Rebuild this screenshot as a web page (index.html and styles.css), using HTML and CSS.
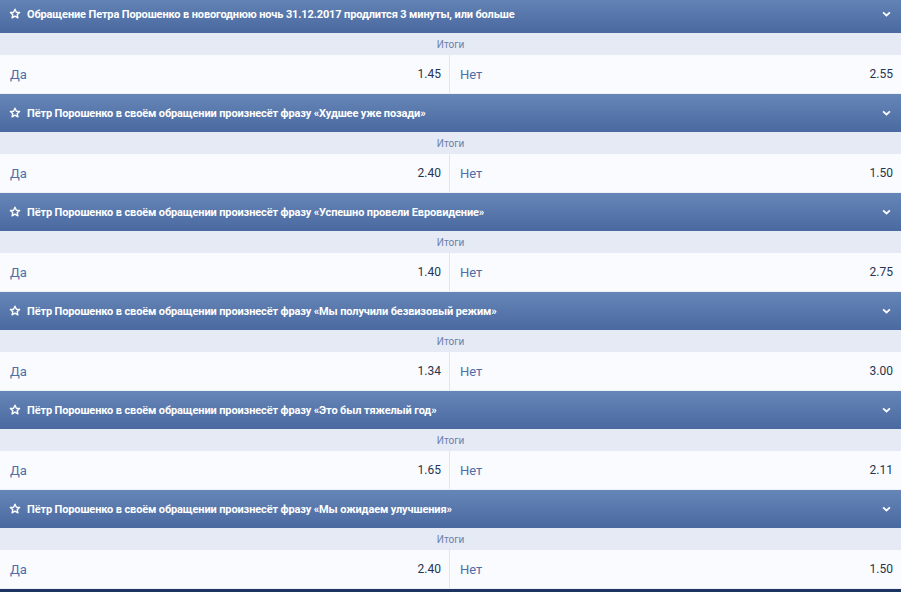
FILE: index.html
```html
<!DOCTYPE html>
<html lang="ru">
<head>
    <meta charset="UTF-8">
    <meta name="viewport" content="width=device-width, initial-scale=1.0">
    <title>Специальные ставки</title>
    <link rel="stylesheet" href="styles.css">
</head>
<body>
    <main class="markets">
        <section class="market">
            <header class="market-head">
                <svg class="star" viewBox="0 0 12 12"><path d="M6 1.2l1.4 3 3.2.3-2.4 2.1.7 3.2L6 8.2 3.1 9.8l.7-3.2L1.4 4.5l3.2-.3z"/></svg>
                <span class="market-title">Обращение Петра Порошенко в новогоднюю ночь 31.12.2017 продлится 3 минуты, или больше</span>
                <svg class="chevron" viewBox="0 0 10 6"><path d="M1.2 1.2L5 4.6l3.8-3.4"/></svg>
            </header>
            <div class="market-group">Итоги</div>
            <div class="outcomes">
                <div class="outcome"><span class="outcome-name">Да</span><span class="odds">1.45</span></div>
                <div class="outcome"><span class="outcome-name">Нет</span><span class="odds">2.55</span></div>
            </div>
        </section>
        <section class="market">
            <header class="market-head">
                <svg class="star" viewBox="0 0 12 12"><path d="M6 1.2l1.4 3 3.2.3-2.4 2.1.7 3.2L6 8.2 3.1 9.8l.7-3.2L1.4 4.5l3.2-.3z"/></svg>
                <span class="market-title">Пётр Порошенко в своём обращении произнесёт фразу «Худшее уже позади»</span>
                <svg class="chevron" viewBox="0 0 10 6"><path d="M1.2 1.2L5 4.6l3.8-3.4"/></svg>
            </header>
            <div class="market-group">Итоги</div>
            <div class="outcomes">
                <div class="outcome"><span class="outcome-name">Да</span><span class="odds">2.40</span></div>
                <div class="outcome"><span class="outcome-name">Нет</span><span class="odds">1.50</span></div>
            </div>
        </section>
        <section class="market">
            <header class="market-head">
                <svg class="star" viewBox="0 0 12 12"><path d="M6 1.2l1.4 3 3.2.3-2.4 2.1.7 3.2L6 8.2 3.1 9.8l.7-3.2L1.4 4.5l3.2-.3z"/></svg>
                <span class="market-title">Пётр Порошенко в своём обращении произнесёт фразу «Успешно провели Евровидение»</span>
                <svg class="chevron" viewBox="0 0 10 6"><path d="M1.2 1.2L5 4.6l3.8-3.4"/></svg>
            </header>
            <div class="market-group">Итоги</div>
            <div class="outcomes">
                <div class="outcome"><span class="outcome-name">Да</span><span class="odds">1.40</span></div>
                <div class="outcome"><span class="outcome-name">Нет</span><span class="odds">2.75</span></div>
            </div>
        </section>
        <section class="market">
            <header class="market-head">
                <svg class="star" viewBox="0 0 12 12"><path d="M6 1.2l1.4 3 3.2.3-2.4 2.1.7 3.2L6 8.2 3.1 9.8l.7-3.2L1.4 4.5l3.2-.3z"/></svg>
                <span class="market-title">Пётр Порошенко в своём обращении произнесёт фразу «Мы получили безвизовый режим»</span>
                <svg class="chevron" viewBox="0 0 10 6"><path d="M1.2 1.2L5 4.6l3.8-3.4"/></svg>
            </header>
            <div class="market-group">Итоги</div>
            <div class="outcomes">
                <div class="outcome"><span class="outcome-name">Да</span><span class="odds">1.34</span></div>
                <div class="outcome"><span class="outcome-name">Нет</span><span class="odds">3.00</span></div>
            </div>
        </section>
        <section class="market">
            <header class="market-head">
                <svg class="star" viewBox="0 0 12 12"><path d="M6 1.2l1.4 3 3.2.3-2.4 2.1.7 3.2L6 8.2 3.1 9.8l.7-3.2L1.4 4.5l3.2-.3z"/></svg>
                <span class="market-title">Пётр Порошенко в своём обращении произнесёт фразу «Это был тяжелый год»</span>
                <svg class="chevron" viewBox="0 0 10 6"><path d="M1.2 1.2L5 4.6l3.8-3.4"/></svg>
            </header>
            <div class="market-group">Итоги</div>
            <div class="outcomes">
                <div class="outcome"><span class="outcome-name">Да</span><span class="odds">1.65</span></div>
                <div class="outcome"><span class="outcome-name">Нет</span><span class="odds">2.11</span></div>
            </div>
        </section>
        <section class="market">
            <header class="market-head">
                <svg class="star" viewBox="0 0 12 12"><path d="M6 1.2l1.4 3 3.2.3-2.4 2.1.7 3.2L6 8.2 3.1 9.8l.7-3.2L1.4 4.5l3.2-.3z"/></svg>
                <span class="market-title">Пётр Порошенко в своём обращении произнесёт фразу «Мы ожидаем улучшения»</span>
                <svg class="chevron" viewBox="0 0 10 6"><path d="M1.2 1.2L5 4.6l3.8-3.4"/></svg>
            </header>
            <div class="market-group">Итоги</div>
            <div class="outcomes">
                <div class="outcome"><span class="outcome-name">Да</span><span class="odds">2.40</span></div>
                <div class="outcome"><span class="outcome-name">Нет</span><span class="odds">1.50</span></div>
            </div>
        </section>
        <footer class="markets-foot"></footer>
    </main>
</body>
</html>
```

FILE: styles.css
```css
:root {
    --head-top: #6686b8;
    --head-bottom: #4a69a0;
    --group-bg: #e6eaf5;
    --row-bg: #f9fbff;
    --divider: #dfe5f1;
    --name-color: #4f6ea8;
    --odds-color: #26344f;
}
body {
    margin: 0;
    padding: 0;
    font-family: Roboto, "Noto Sans", Arial, sans-serif;
    background-color: var(--row-bg);
    overflow: hidden;
}
/* list is scrolled a little, so the first header is cut at the top */
.markets {
    margin-top: -5px;
}
.market-head {
    display: flex;
    align-items: center;
    height: 38px;
    padding: 0 10px 0 9px;
    background: linear-gradient(to bottom, var(--head-top), var(--head-bottom));
    color: #fff;
    box-sizing: border-box;
}
.star {
    width: 12px;
    height: 12px;
    flex-shrink: 0;
    fill: none;
    stroke: #fff;
    stroke-width: 1.4;
    stroke-linejoin: round;
}
.market-title {
    flex: 1;
    margin-left: 6px;
    font-size: 11px;
    font-weight: 700;
    letter-spacing: -0.13px;
    white-space: nowrap;
}
.chevron {
    width: 9px;
    height: 6px;
    fill: none;
    stroke: #fff;
    stroke-width: 2;
}
.market-group {
    height: 22px;
    line-height: 23px;
    text-align: center;
    background-color: var(--group-bg);
    color: #6a7fa9;
    font-size: 10px;
}
.outcomes {
    display: grid;
    grid-template-columns: 450px 1fr;
    height: 38px;
    border-bottom: 1px solid #eef1f8;
    background-color: var(--row-bg);
}
.outcome {
    display: flex;
    align-items: center;
    justify-content: space-between;
    padding: 0 8px 0 10px;
}
.outcome:first-child {
    border-right: 1px solid var(--divider);
}
.outcome-name {
    font-size: 13px;
    color: var(--name-color);
}
.odds {
    font-size: 12px;
    color: var(--odds-color);
}
.markets-foot {
    height: 6px;
    background-color: #1c3460;
}
```
